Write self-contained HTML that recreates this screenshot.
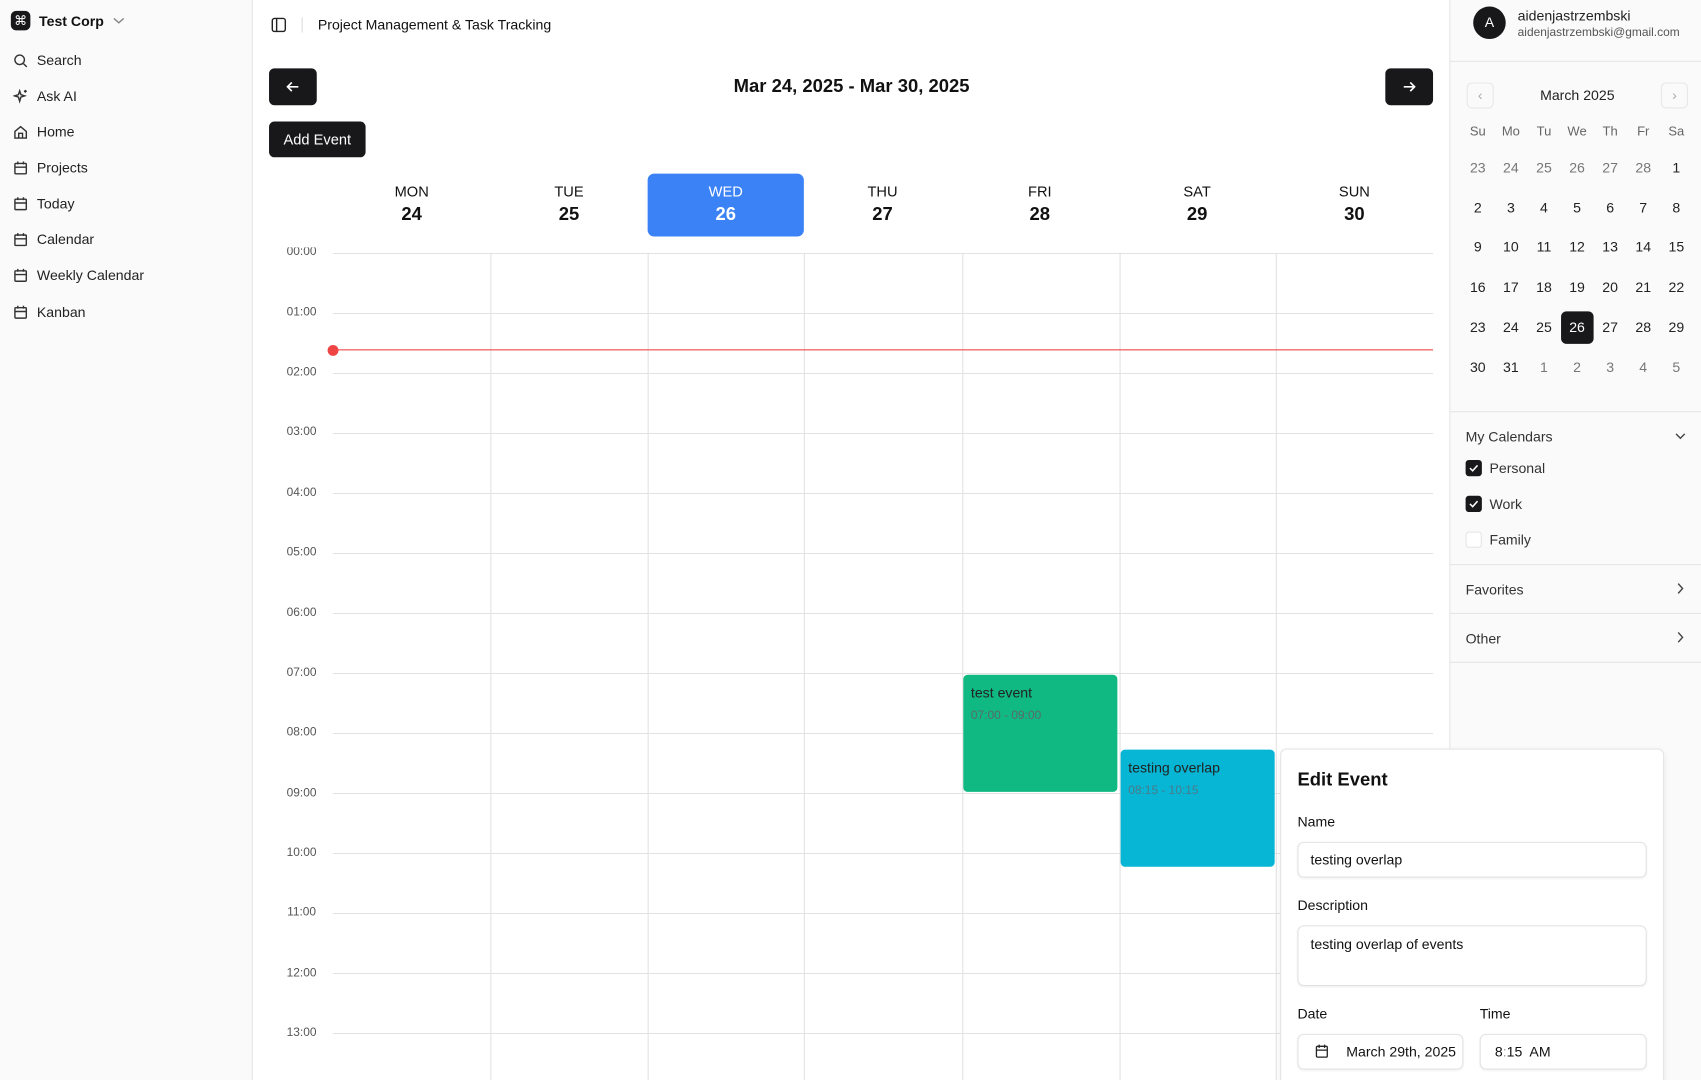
<!DOCTYPE html>
<html><head><meta charset="utf-8"><style>
*{box-sizing:border-box;margin:0;padding:0}
html,body{width:1701px;height:1080px;overflow:hidden;background:#fff;font-family:"Liberation Sans",Arial,sans-serif;color:#111}
#w{position:absolute;left:0;top:0;width:1568px;height:996px;overflow:hidden;transform:scale(1.08482);transform-origin:0 0}
.a{position:absolute}
.side{left:0;top:0;width:233px;height:1000px;background:#fafafa;border-right:1px solid #e5e5e5}
.nav{left:12px;font-size:13px;color:#222;display:flex;align-items:center;gap:8px}
.nav svg{width:14px;height:14px;stroke:#333;fill:none;stroke-width:1.5}
.btn{background:#18181b;border-radius:5px;color:#fff}
.day{width:145px;text-align:center;top:160px;height:58px;padding-top:9px;font-size:13.5px}
.day b{display:block;font-size:17px;margin-top:4px}
.hl{background:#3b82f6;color:#fff;border-radius:6px}
.tl{left:18px;width:40px;text-align:center;font-size:11px;color:#555}
.vl{top:233px;width:1px;height:770px;background:#e2e2e2}
.right{left:1336px;top:0;width:232px;height:1000px;background:#fafafa;border-left:1px solid #e5e5e5}
.sep{height:1px;background:#e5e5e5}
.cb{left:1351px;width:15px;height:15px;border-radius:3px;background:#18181b}
.in{border:1px solid #e2e2e2;border-radius:6px;background:#fff;font-size:13px;box-shadow:0 1px 2px rgba(0,0,0,.05)}
</style></head><body><div id="w">
<div class="a side"></div>
<div class="a" style="left:10px;top:10px;width:18px;height:18px;border-radius:5px;background:#18181b;color:#fff;font-size:12px;text-align:center;line-height:18px">⌘</div>
<div class="a" style="left:36px;top:12px;font-size:13px;font-weight:bold">Test Corp</div>
<svg class="a" style="left:104px;top:15px" width="11" height="8" viewBox="0 0 11 8"><path d="M1 2l4.5 4L10 2" stroke="#888" fill="none" stroke-width="1.3"/></svg>
<div class="a nav" style="top:48px"><svg viewBox="0 0 16 16"><circle cx="7" cy="7" r="5"/><path d="M11 11l3.5 3.5"/></svg>Search</div>
<div class="a nav" style="top:81px"><svg viewBox="0 0 16 16"><path d="M7 2l1.3 4 4 1.3-4 1.3L7 13 5.7 8.6 1.7 7.3l4-1.3z"/><path d="M13 1v3M11.5 2.5h3"/></svg>Ask AI</div>
<div class="a nav" style="top:114px"><svg viewBox="0 0 16 16"><path d="M2 7l6-5 6 5v7H2z"/><path d="M6 14V9h4v5"/></svg>Home</div>
<div class="a nav" style="top:147px"><svg viewBox="0 0 16 16"><rect x="2" y="3" width="12" height="11" rx="1"/><path d="M2 7h12M5 1v3M11 1v3"/></svg>Projects</div>
<div class="a nav" style="top:180px"><svg viewBox="0 0 16 16"><rect x="2" y="3" width="12" height="11" rx="1"/><path d="M2 7h12M5 1v3M11 1v3"/></svg>Today</div>
<div class="a nav" style="top:213px"><svg viewBox="0 0 16 16"><rect x="2" y="3" width="12" height="11" rx="1"/><path d="M2 7h12M5 1v3M11 1v3"/></svg>Calendar</div>
<div class="a nav" style="top:246px"><svg viewBox="0 0 16 16"><rect x="2" y="3" width="12" height="11" rx="1"/><path d="M2 7h12M5 1v3M11 1v3"/></svg>Weekly Calendar</div>
<div class="a nav" style="top:280px"><svg viewBox="0 0 16 16"><rect x="2" y="3" width="12" height="11" rx="1"/><path d="M2 7h12M5 1v3M11 1v3"/></svg>Kanban</div>

<svg class="a" style="left:250px;top:16px" width="14" height="14" viewBox="0 0 14 14"><rect x="1" y="1" width="12" height="12" rx="2" stroke="#222" fill="none" stroke-width="1.3"/><path d="M5 1v12" stroke="#222" stroke-width="1.3"/></svg>
<div class="a" style="left:278px;top:16px;width:1px;height:14px;background:#ddd"></div>
<div class="a" style="left:293px;top:15px;font-size:13px">Project Management &amp; Task Tracking</div>

<div class="a btn" style="left:248px;top:63px;width:44px;height:34px"><svg width="44" height="34"><path d="M17 17h10M21 13l-4 4 4 4" stroke="#fff" fill="none" stroke-width="1.5"/></svg></div>
<div class="a" style="left:560px;top:70px;width:450px;text-align:center;font-size:17px;font-weight:bold">Mar 24, 2025 - Mar 30, 2025</div>
<div class="a btn" style="left:1277px;top:63px;width:44px;height:34px"><svg width="44" height="34"><path d="M17 17h10M23 13l4 4-4 4" stroke="#fff" fill="none" stroke-width="1.5"/></svg></div>
<div class="a btn" style="left:248px;top:112px;width:89px;height:33px;font-size:13.5px;text-align:center;line-height:33px">Add Event</div>

<div class="a day" style="left:307px">MON<b>24</b></div>
<div class="a day" style="left:452px">TUE<b>25</b></div>
<div class="a day hl" style="left:597px;width:144px">WED<b>26</b></div>
<div class="a day" style="left:741px">THU<b>27</b></div>
<div class="a day" style="left:886px">FRI<b>28</b></div>
<div class="a day" style="left:1031px">SAT<b>29</b></div>
<div class="a day" style="left:1176px">SUN<b>30</b></div>

<div class="a" style="left:240px;top:228px;width:1090px;height:770px;overflow:hidden">
<div class="a" style="left:67px;top:5px;width:1014px;height:800px;background:repeating-linear-gradient(to bottom,#e2e2e2 0,#e2e2e2 1px,transparent 1px,transparent 55.33px)"></div>
<div class="a tl" style="top:-2px">00:00</div>
<div class="a tl" style="top:54px">01:00</div>
<div class="a tl" style="top:109px">02:00</div>
<div class="a tl" style="top:164px">03:00</div>
<div class="a tl" style="top:220px">04:00</div>
<div class="a tl" style="top:275px">05:00</div>
<div class="a tl" style="top:331px">06:00</div>
<div class="a tl" style="top:386px">07:00</div>
<div class="a tl" style="top:441px">08:00</div>
<div class="a tl" style="top:497px">09:00</div>
<div class="a tl" style="top:552px">10:00</div>
<div class="a tl" style="top:607px">11:00</div>
<div class="a tl" style="top:663px">12:00</div>
<div class="a tl" style="top:718px">13:00</div>
</div>
<div class="a vl" style="left:452px"></div><div class="a vl" style="left:597px"></div><div class="a vl" style="left:741px"></div><div class="a vl" style="left:887px"></div><div class="a vl" style="left:1032px"></div><div class="a vl" style="left:1176px"></div>
<div class="a" style="left:307px;top:322px;width:1014px;height:1px;background:#ef4444"></div>
<div class="a" style="left:302px;top:318px;width:10px;height:10px;border-radius:50%;background:#ef4444"></div>

<div class="a" style="left:888px;top:622px;width:142px;height:108px;background:#10b981;border-radius:4px;padding:9px 7px;font-size:13px;color:#222">test event<div style="font-size:11px;color:#5a6a6a;margin-top:8px">07:00 - 09:00</div></div>
<div class="a" style="left:1033px;top:691px;width:142px;height:108px;background:#06b6d4;border-radius:4px;padding:9px 7px;font-size:13px;color:#222">testing overlap<div style="font-size:11px;color:#4a7a8a;margin-top:8px">08:15 - 10:15</div></div>

<div class="a right"></div>
<div class="a" style="left:1358px;top:6px;width:30px;height:30px;border-radius:50%;background:#18181b;color:#fff;font-size:13px;text-align:center;line-height:30px">A</div>
<div class="a" style="left:1399px;top:7px;font-size:13px;color:#222">aidenjastrzembski</div>
<div class="a" style="left:1399px;top:24px;font-size:11px;color:#555">aidenjastrzembski@gmail.com</div>
<div class="a sep" style="left:1337px;top:56px;width:231px"></div>
<div class="a" style="left:1352px;top:76px;width:25px;height:24px;border:1px solid #e8e8e8;border-radius:5px;text-align:center;line-height:21px;color:#aaa;font-size:13px">‹</div>
<div class="a" style="left:1531px;top:76px;width:25px;height:24px;border:1px solid #e8e8e8;border-radius:5px;text-align:center;line-height:21px;color:#aaa;font-size:13px">›</div>
<div class="a" style="left:1404px;top:80px;width:100px;text-align:center;font-size:13px;color:#222">March 2025</div>
<div class="a" style="left:1347px;top:114px;display:grid;grid-template-columns:repeat(7,30.5px);font-size:12px;color:#666;text-align:center">
<span>Su</span><span>Mo</span><span>Tu</span><span>We</span><span>Th</span><span>Fr</span><span>Sa</span></div>
<div class="a" style="left:1347px;top:136px;display:grid;grid-template-columns:repeat(7,30.5px);grid-auto-rows:36.8px;font-size:13px;color:#222;text-align:center;align-items:center">
<span style="color:#777">23</span><span style="color:#777">24</span><span style="color:#777">25</span><span style="color:#777">26</span><span style="color:#777">27</span><span style="color:#777">28</span><span>1</span>
<span>2</span><span>3</span><span>4</span><span>5</span><span>6</span><span>7</span><span>8</span>
<span>9</span><span>10</span><span>11</span><span>12</span><span>13</span><span>14</span><span>15</span>
<span>16</span><span>17</span><span>18</span><span>19</span><span>20</span><span>21</span><span>22</span>
<span>23</span><span>24</span><span>25</span><span style="background:#18181b;color:#fff;border-radius:5px;height:30px;line-height:30px;margin:0 0.5px">26</span><span>27</span><span>28</span><span>29</span>
<span>30</span><span>31</span><span style="color:#777">1</span><span style="color:#777">2</span><span style="color:#777">3</span><span style="color:#777">4</span><span style="color:#777">5</span></div>
<div class="a sep" style="left:1337px;top:379px;width:231px"></div>
<div class="a" style="left:1351px;top:395px;font-size:13px;color:#333">My Calendars</div>
<svg class="a" style="left:1544px;top:398px" width="10" height="8"><path d="M1 2l4 4 4-4" stroke="#444" fill="none" stroke-width="1.3"/></svg>
<div class="a cb" style="top:424px"><svg width="15" height="15"><path d="M4 7.5l2.5 2.5 4.5-5" stroke="#fff" fill="none" stroke-width="1.4"/></svg></div>
<div class="a" style="left:1373px;top:424px;font-size:13px;color:#333">Personal</div>
<div class="a cb" style="top:457px"><svg width="15" height="15"><path d="M4 7.5l2.5 2.5 4.5-5" stroke="#fff" fill="none" stroke-width="1.4"/></svg></div>
<div class="a" style="left:1373px;top:457px;font-size:13px;color:#333">Work</div>
<div class="a cb" style="top:490px;background:#fff;border:1px solid #e5e5e5"></div>
<div class="a" style="left:1373px;top:490px;font-size:13px;color:#333">Family</div>
<div class="a sep" style="left:1337px;top:520px;width:231px"></div>
<div class="a" style="left:1351px;top:536px;font-size:13px;color:#333">Favorites</div>
<svg class="a" style="left:1545px;top:537px" width="8" height="11"><path d="M2 1l4 4.5L2 10" stroke="#444" fill="none" stroke-width="1.3"/></svg>
<div class="a sep" style="left:1337px;top:565px;width:231px"></div>
<div class="a" style="left:1351px;top:581px;font-size:13px;color:#333">Other</div>
<svg class="a" style="left:1545px;top:582px" width="8" height="11"><path d="M2 1l4 4.5L2 10" stroke="#444" fill="none" stroke-width="1.3"/></svg>
<div class="a sep" style="left:1337px;top:610px;width:231px"></div>

<div class="a" style="left:1180px;top:690px;width:354px;height:320px;background:#fff;border:1px solid #e5e5e5;border-radius:6px;box-shadow:0 2px 6px rgba(0,0,0,.06)"></div>
<div class="a" style="left:1196px;top:709px;font-size:17px;font-weight:bold">Edit Event</div>
<div class="a" style="left:1196px;top:750px;font-size:13px">Name</div>
<div class="a in" style="left:1196px;top:776px;width:322px;height:33px;padding:8px 11px">testing overlap</div>
<div class="a" style="left:1196px;top:827px;font-size:13px">Description</div>
<div class="a in" style="left:1196px;top:853px;width:322px;height:56px;padding:9px 11px">testing overlap of events</div>
<div class="a" style="left:1196px;top:927px;font-size:13px">Date</div>
<div class="a" style="left:1364px;top:927px;font-size:13px">Time</div>
<div class="a in" style="left:1196px;top:953px;width:153px;height:33px;padding:8px 0 0 44px">March 29th, 2025</div>
<svg class="a" style="left:1212px;top:962px" width="13" height="14" viewBox="0 0 13 14"><rect x="1.5" y="2.5" width="10" height="10" rx="1" stroke="#222" fill="none" stroke-width="1.2"/><path d="M1.5 6h10M4 1v3M9 1v3" stroke="#222" stroke-width="1.2"/></svg>
<div class="a in" style="left:1364px;top:953px;width:154px;height:33px;padding:8px 13px">8<span style="color:#999">:</span>15&nbsp; AM</div>
</div></body></html>
